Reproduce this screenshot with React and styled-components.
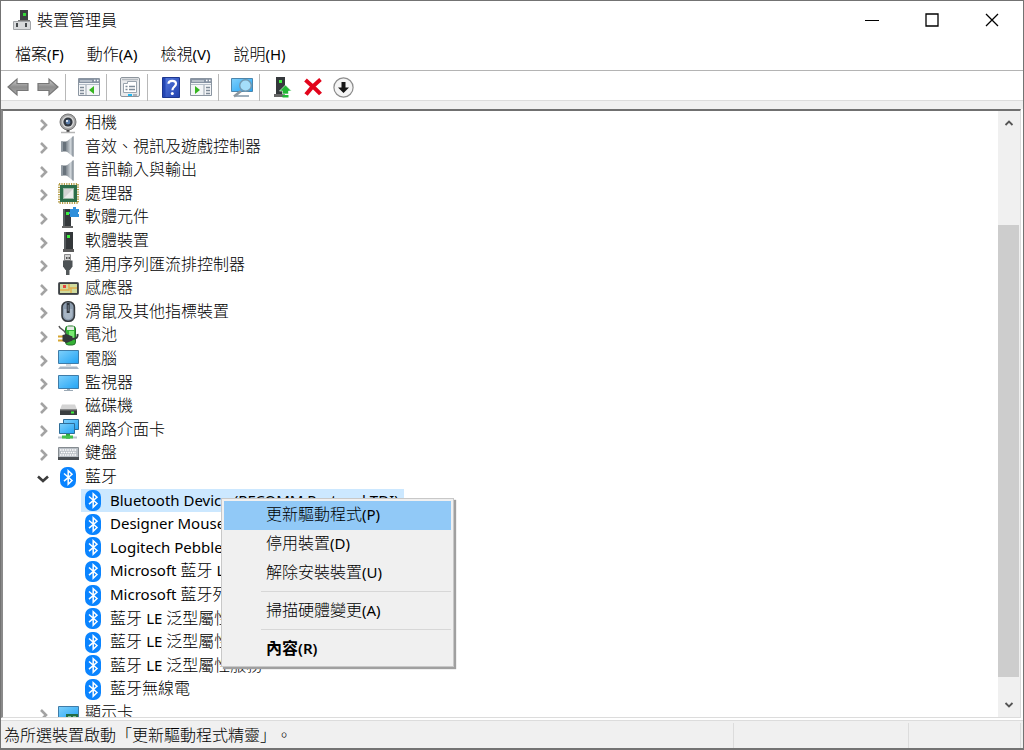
import React from 'react';
import styled, { createGlobalStyle, css } from 'styled-components';

const theme = {
  font: "'Open Sans', 'Noto Sans CJK TC', sans-serif",
  latin: "'Noto Sans', 'Open Sans', sans-serif",
  text: '#000',
  face: '#f0f0f0',
  line: '#dcdcdc',
  frame: '#737373',
  selected: '#cce8ff',
  hover: '#91c9f7',
};

const GlobalStyle = createGlobalStyle`
  * {
    box-sizing: border-box;
  }
  body {
    margin: 0;
    background: #fff;
  }
  button {
    border: none;
    padding: 0;
    background: none;
    color: inherit;
    font: inherit;
  }
  svg {
    display: block;
    flex: none;
  }
`;

const Window = styled.div`
  display: flex;
  flex-direction: column;
  height: 100vh;
  border: 1px solid ${theme.frame};
  border-bottom-width: 2px;
  background: #fff;
  color: ${theme.text};
  font-family: ${theme.font};
  font-size: 16px;
  font-weight: 300;
  line-height: 24px;
  text-spacing-trim: space-all;
  overflow: hidden;
  white-space: nowrap;
`;

const Text = styled.span`
  display: block;
  padding-bottom: 2px;
  line-height: 22px;
`;

const Latin = styled.span`
  font-family: ${theme.latin};
  font-size: 15px;
  font-weight: ${(props) => (props.$bold ? 600 : 400)};
`;

const TitleBar = styled.header`
  display: flex;
  align-items: center;
  height: 38px;
  flex: none;
  padding: 0 1px 0 11px;
`;

const Title = styled.h1`
  flex: 1;
  margin: 0 0 0 5px;
  font-size: 16px;
  font-weight: 300;
`;

const CaptionButton = styled.button`
  display: flex;
  align-items: center;
  justify-content: center;
  width: 60px;
  height: 36px;
`;

const MenuBar = styled.nav`
  display: flex;
  align-items: center;
  height: 31px;
  flex: none;
  padding-left: 14px;
  gap: 23px;
`;

const MenuButton = styled.button`
  display: block;
`;

const ToolBar = styled.div`
  display: flex;
  align-items: center;
  height: 31px;
  flex: none;
  padding: 3px 0 0 2px;
  border-top: 1px solid #b4b4b4;
  border-bottom: 1px solid ${theme.line};
`;

const ToolButton = styled.button`
  display: flex;
  align-items: center;
  justify-content: center;
  width: 30px;
  height: 26px;
`;

const Divider = styled.span`
  width: 1px;
  height: 27px;
  margin: 0 8px 0 2px;
  background: #b8b8b8;
`;

const Pane = styled.main`
  position: relative;
  display: flex;
  flex: 1;
  min-height: 0;
  margin-right: 2px;
  border-left: 2px solid #8a8a8a;
  border-right: 1px solid ${theme.line};
  border-top: 2px solid #707070;
  border-bottom: 1px solid ${theme.line};
`;

const Band = styled.div`
  height: 8px;
  flex: none;
  background: ${theme.face};
`;

const Tree = styled.ul`
  flex: 1;
  min-width: 0;
  margin: 0;
  padding: 0 0 0 32px;
  list-style: none;
  overflow: hidden;
`;

const Row = styled.li`
  display: flex;
  align-items: center;
  height: 24px;
  padding-left: ${(props) => (props.$child ? 46 : 0)}px;
  &:nth-child(5n + 2),
  &:nth-child(5n + 4) {
    height: 23px;
  }
`;

const Toggle = styled.button`
  display: flex;
  justify-content: center;
  width: 16px;
  margin: 3px 5px 0 0;
`;

const Entry = styled.span`
  display: flex;
  align-items: center;
  height: 100%;
  padding: 0 5px 0 2px;
  gap: 6px;
  ${(props) =>
    props.$selected &&
    css`
      background: ${theme.selected};
    `}
`;

const ScrollBar = styled.div`
  display: flex;
  flex-direction: column;
  width: 22px;
  background: ${theme.face};
`;

const ScrollButton = styled.button`
  display: flex;
  align-items: center;
  justify-content: center;
  height: 24px;
  flex: none;
`;

const Track = styled.div`
  flex: ${(props) => props.$share};
`;

const Thumb = styled(Track)`
  margin-right: 1px;
  background: #cdcdcd;
`;

const ContextMenu = styled.div`
  position: absolute;
  top: 387px;
  left: 218px;
  width: 233px;
  padding: 2px;
  border: 1px solid #c8c8c8;
  background: ${theme.face};
  box-shadow: 2px 2px 1px #a0a0a0;
`;

const ContextItem = styled.button`
  display: flex;
  align-items: center;
  width: 100%;
  height: 29px;
  padding: 0 0 1px 42px;
  font-weight: ${(props) => (props.$bold ? 700 : 300)};
  background: ${(props) => (props.$active ? theme.hover : 'none')};
`;

const Separator = styled.hr`
  height: 1px;
  margin: 3px 0 5px 37px;
  border: none;
  background: #d7d7d7;
`;

const StatusBar = styled.footer`
  display: flex;
  height: 28px;
  flex: none;
  margin-top: 2px;
  padding: 2px 2px 0 0;
  border-top: 1px solid ${theme.line};
  background: ${theme.face};
`;

const StatusCell = styled.div`
  flex: ${(props) => (props.$width ? `0 0 ${props.$width}px` : 1)};
  min-width: 0;
  padding-left: 3px;
  border-right: 1px solid ${theme.line};
`;

// the latin part of a label is set one size smaller than the chinese part
const Label = ({ children, bold }) => (
  <Text>
    {children.split(/([\x21-\x7e][\x20-\x7e]*)/).map((part, i) =>
      i % 2 ? (
        <Latin key={i} $bold={bold}>
          {part}
        </Latin>
      ) : (
        part
      )
    )}
  </Text>
);

const Svg = ({ children, w = 21, h = 21 }) => (
  <svg width={w} height={h} viewBox={`0 0 ${w} ${h}`} aria-hidden='true'>
    {children}
  </svg>
);

const Defs = styled.svg`
  position: absolute;
`;

const Gradients = () => (
  <Defs width='0' height='0' aria-hidden='true'>
    <defs>
      <linearGradient id='screen' x1='0' y1='0' x2='1' y2='1'>
        <stop offset='0' stopColor='#7fd0fb' />
        <stop offset='1' stopColor='#22a4f5' />
      </linearGradient>
      <linearGradient id='metal' x1='0' y1='0' x2='1' y2='0'>
        <stop offset='0' stopColor='#7c858d' />
        <stop offset='0.6' stopColor='#cdd3d8' />
        <stop offset='1' stopColor='#8a939b' />
      </linearGradient>
      <linearGradient id='arrow' x1='0' y1='0' x2='0' y2='1'>
        <stop offset='0' stopColor='#d2d2d2' />
        <stop offset='0.5' stopColor='#8d8d8d' />
        <stop offset='1' stopColor='#a9a9a9' />
      </linearGradient>
      <linearGradient id='book' x1='0' y1='0' x2='1' y2='1'>
        <stop offset='0' stopColor='#5b7fe0' />
        <stop offset='1' stopColor='#1f3fae' />
      </linearGradient>
    </defs>
  </Defs>
);

const icons = {
  camera: (
    <Svg>
      <circle cx='10' cy='9' r='8' fill='#a4a4a4' stroke='#777' />
      <circle cx='10' cy='9' r='6' fill='#d8d8d8' />
      <circle cx='10' cy='9' r='4.6' fill='#31373f' />
      <circle cx='10' cy='9' r='2.4' fill='#5a7ca8' />
      <circle cx='9' cy='8' r='1' fill='#fff' />
      <path d='M8.5 17h3v2h-3z' fill='#444' />
      <path d='M3 19.5h14' stroke='#b5b5b5' strokeWidth='1.5' />
    </Svg>
  ),
  speaker: (
    <Svg>
      <path d='M3 5.5h6v10H3z' fill='#68727b' />
      <path d='M3 5.5h2v10H3z' fill='#929ba3' />
      <path d='M8 6l7.5-6v21L8 15z' fill='url(#metal)' />
      <path d='M15 0.5v20' stroke='#8d969e' />
    </Svg>
  ),
  chip: (
    <Svg>
      <rect x='1' y='1' width='19' height='19' fill='none' stroke='#b49b45' strokeWidth='2' strokeDasharray='1.2 1.2' />
      <rect x='2' y='2' width='17' height='17' fill='#2c6e4a' />
      <rect x='5.5' y='5.5' width='10' height='10' fill='#d4d4d4' stroke='#9dbba9' />
      <path d='M15 6v9H6z' fill='#ececec' />
    </Svg>
  ),
  component: (
    <Svg>
      <path d='M4 19h11v2H4z' fill='#666' />
      <path d='M5 2h8v17H5z' fill='#34383b' />
      <path d='M5 2h2v17H5z' fill='#555a5d' />
      <path d='M8 5h3v3H8z' fill='#3df03d' />
      <path d='M12 2h3V0h3v2h3v3h-1v2h1v3h-9V7h-1V5h1z' fill='#2f8fdb' />
    </Svg>
  ),
  device: (
    <Svg>
      <path d='M5 18h11v3H5z' fill='#5b5b5b' />
      <path d='M6 1h9v17H6z' fill='#33373a' />
      <path d='M6 1h2v17H6z' fill='#565b5e' />
      <path d='M9 4h3v3H9z' fill='#3df03d' />
    </Svg>
  ),
  usb: (
    <Svg>
      <path d='M6.5 0.5h6v6h-6z' fill='#d3d3d3' stroke='#8b8b8b' />
      <path d='M8 3h1.5v2H8zM10.5 3H12v2h-1.5z' fill='#555' />
      <path d='M5 6.5h9.5v6L12 16H7.5L5 12.5z' fill='#4d5255' />
      <path d='M8 16h3.5v5H8z' fill='#53585b' />
    </Svg>
  ),
  sensor: (
    <Svg>
      <rect x='0.5' y='4.5' width='20' height='12' rx='1' fill='#3c4043' stroke='#55595c' />
      <path d='M2 6h17v9H2z' fill='#cfdb9e' />
      <path d='M2 12h9V6M11 10h8M13 15v-5' stroke='#e1ae4d' strokeWidth='1.4' fill='none' />
      <path d='M5 7h3v3H5z' fill='#e64840' />
    </Svg>
  ),
  mouse: (
    <Svg>
      <rect x='4' y='0.8' width='12.4' height='19.4' rx='5.5' fill='#8b9bad' stroke='#34383d' strokeWidth='1.6' />
      <path d='M6 8v6a4.2 4.2 0 0 0 8.4 0V8' fill='#a8b6c5' />
      <path d='M8.7 2h3v10h-3z' fill='#2f353c' />
      <path d='M10.2 4v6' stroke='#7a8592' />
    </Svg>
  ),
  battery: (
    <Svg>
      <rect x='7.5' y='1' width='10' height='19' rx='3' fill='#35b236' stroke='#24712a' />
      <path d='M9 1.5h7V5H9z' fill='#e6eae6' />
      <path d='M11 6h5v7h-5z' fill='#7bea74' />
      <path d='M1 1c1 4 5 2 7 8' fill='none' stroke='#555' strokeWidth='1.4' />
      <path d='M0 11.5h6M0 15.5h6' stroke='#d6a52f' strokeWidth='1.8' />
      <path d='M4.5 10l4-1 6 2.5v4L8.5 18l-4-2z' fill='#34383a' />
      <path d='M14 14c5 0 6-2 5.5-5' fill='none' stroke='#34383a' strokeWidth='2' />
    </Svg>
  ),
  computer: (
    <Svg>
      <path d='M0.5 1.5h20v13h-20z' fill='url(#screen)' stroke='#3f7ca8' />
      <path d='M8 15h5v2H8z' fill='#d3dae0' />
      <path d='M2 17.5h17l2 2.5H0z' fill='#a7b5c3' />
    </Svg>
  ),
  monitor: (
    <Svg>
      <path d='M0.5 3.5h20v13h-20z' fill='url(#screen)' stroke='#3f7ca8' />
      <path d='M9 17h3v2H9z' fill='#9ba9b5' />
      <path d='M6 18.5h9' stroke='#9ba9b5' />
    </Svg>
  ),
  disk: (
    <Svg>
      <path d='M4 8.5h13l2 5H2z' fill='#d4d4d4' />
      <path d='M2 13.5h17V19H2z' fill='#3b3e40' />
      <path d='M2 13.5h17v1H2z' fill='#777' />
      <path d='M13 15.5h3v2h-3z' fill='#3df03d' />
    </Svg>
  ),
  network: (
    <Svg>
      <path d='M5.5 0.5h15v10h-15z' fill='url(#screen)' stroke='#2e6d98' />
      <path d='M1.5 4.5h15v10h-15z' fill='url(#screen)' stroke='#2e6d98' />
      <path d='M8 15h4v5H8z' fill='#2fa83c' />
      <path d='M0 18.5h19' stroke='#b9c3cb' strokeWidth='2' />
      <path d='M4 18h11' stroke='#43c24c' strokeWidth='3' />
    </Svg>
  ),
  keyboard: (
    <Svg>
      <path d='M0.5 4.5h20v11h-20z' fill='#b9bfc5' stroke='#858b90' />
      <path d='M2 7h17M3 9.5h15M2 12h17' stroke='#fff' strokeWidth='1.6' strokeDasharray='1.6 0.8' />
      <path d='M0 14h21v3H0z' fill='#4a4e52' />
    </Svg>
  ),
  bluetooth: (
    <Svg>
      <rect x='2' y='0' width='16' height='21' rx='7' fill='#0a84ff' />
      <path d='M6 6.5l8 7-3.8 3.8V3.7L14 7.3l-8 6.8' fill='none' stroke='#fff' strokeWidth='1.5' />
    </Svg>
  ),
  display: (
    <Svg>
      <path d='M0.5 3.5h20v13h-20z' fill='url(#screen)' stroke='#3f7ca8' />
      <path d='M8 11h12v7H8z' fill='#236c44' />
      <path d='M10 13h3v2h-3zM15 13h3v3h-3z' fill='#7cc092' />
    </Svg>
  ),
};

const tree = [
  ['camera', '相機'],
  ['speaker', '音效、視訊及遊戲控制器'],
  ['speaker', '音訊輸入與輸出'],
  ['chip', '處理器'],
  ['component', '軟體元件'],
  ['device', '軟體裝置'],
  ['usb', '通用序列匯流排控制器'],
  ['sensor', '感應器'],
  ['mouse', '滑鼠及其他指標裝置'],
  ['battery', '電池'],
  ['computer', '電腦'],
  ['monitor', '監視器'],
  ['disk', '磁碟機'],
  ['network', '網路介面卡'],
  ['keyboard', '鍵盤'],
  [
    'bluetooth',
    '藍牙',
    [
      'Bluetooth Device (RFCOMM Protocol TDI)',
      'Designer Mouse',
      'Logitech Pebble',
      'Microsoft 藍牙 LE',
      'Microsoft 藍牙列',
      '藍牙 LE 泛型屬性服務',
      '藍牙 LE 泛型屬性服務',
      '藍牙 LE 泛型屬性服務',
      '藍牙無線電',
    ],
  ],
  ['display', '顯示卡'],
];

const Console = ({ flip }) => (
  <Svg w={22} h={20}>
    <path d='M0.5 1.5h21v17h-21z' fill='#f3f5f7' stroke='#8b95a1' />
    <path d='M1 2h20v4H1z' fill='#8793a3' />
    <path d='M2 4h12' stroke='#e6eaee' />
    <path d='M16 3.5h1.5M19 3.5h1.5' stroke='#fff' strokeWidth='1.5' />
    <path d='M1 7.5h20' stroke='#b5bec8' />
    {flip ? (
      <>
        <path d='M14 8v10' stroke='#9aa4af' />
        <path d='M16 10.5h4M16 13.5h4M16 16.5h4' stroke='#7f8b98' strokeWidth='1.4' />
        <path d='M5 9v8l5-4z' fill='#36b51f' />
      </>
    ) : (
      <>
        <path d='M8 8v10' stroke='#9aa4af' />
        <path d='M2 10.5h4M2 13.5h4M2 16.5h4' stroke='#7f8b98' strokeWidth='1.4' />
        <path d='M16 9v8l-5-4z' fill='#36b51f' />
      </>
    )}
  </Svg>
);

const Arrow = ({ d }) => (
  <Svg w={22} h={20}>
    <path d={d} fill='url(#arrow)' stroke='#777' strokeWidth='1.2' />
  </Svg>
);

const Chevron = ({ open }) =>
  open ? (
    <Svg w={12} h={10}>
      <path d='M1 2.5L6 7l5-4.5' fill='none' stroke='#3c3c3c' strokeWidth='2.6' />
    </Svg>
  ) : (
    <Svg w={9} h={12}>
      <path d='M2 1L7 6l-5 5' fill='none' stroke='#a3a3a3' strokeWidth='2.6' />
    </Svg>
  );

const ScrollArrow = ({ d }) => (
  <Svg w={10} h={8}>
    <path d={d} fill='none' stroke='#555' strokeWidth='1.8' />
  </Svg>
);

const DeviceTree = () => (
  <Tree role='tree'>
    {tree.map(([icon, name, children]) => (
      <React.Fragment key={name}>
        <Row role='treeitem' aria-expanded={!!children}>
          <Toggle aria-label={name}>
            <Chevron open={!!children} />
          </Toggle>
          <Entry>
            {icons[icon]}
            <Label>{name}</Label>
          </Entry>
        </Row>
        {children &&
          children.map((child, i) => (
            <Row key={i} role='treeitem' $child>
              <Entry $selected={i === 0}>
                {icons[icon]}
                <Label>{child}</Label>
              </Entry>
            </Row>
          ))}
      </React.Fragment>
    ))}
  </Tree>
);

const Tools = () => (
  <ToolBar role='toolbar'>
    <ToolButton aria-label='上一頁'>
      <Arrow d='M1 10l9-8v4.5h11v7H10V18z' />
    </ToolButton>
    <ToolButton aria-label='下一頁'>
      <Arrow d='M21 10l-9-8v4.5H1v7h11V18z' />
    </ToolButton>
    <Divider />
    <ToolButton aria-label='顯示主控台樹狀目錄'>
      <Console />
    </ToolButton>
    <Divider />
    <ToolButton aria-label='內容'>
      <Svg w={20} h={21}>
        <rect x='0.5' y='0.5' width='19' height='19' rx='1.5' fill='#e8eaec' stroke='#8d959d' />
        <path d='M2 2.5h16' stroke='#b4bac0' strokeWidth='1.6' />
        <path d='M3.5 6.5h4v-2h9v11h-13z' fill='#fff' stroke='#9aa4ae' />
        <path d='M5.5 9.5h2M5.5 12.5h2M9 9.5h6M9 12.5h6' stroke='#7f8c99' strokeWidth='1.3' />
        <path d='M8 18h4' stroke='#22b8f0' strokeWidth='2' />
        <path d='M13 18h4' stroke='#9aa4ae' strokeWidth='1.6' />
      </Svg>
    </ToolButton>
    <Divider />
    <ToolButton aria-label='說明'>
      <Svg w={18} h={21}>
        <path d='M0.5 0.5h17v20h-17z' fill='url(#book)' stroke='#1d378f' />
        <path d='M1 1h2.5v19H1z' fill='#2446b4' />
        <path d='M6.5 6.8C6.5 2.8 14 2.8 14 6.8c0 3-3.6 3-3.6 6.4' fill='none' stroke='#fff' strokeWidth='2.2' />
        <circle cx='10.3' cy='16.6' r='1.5' fill='#fff' />
      </Svg>
    </ToolButton>
    <ToolButton aria-label='顯示動作窗格'>
      <Console flip />
    </ToolButton>
    <Divider />
    <ToolButton aria-label='掃描硬體變更'>
      <Svg w={22} h={21}>
        <path d='M0.5 1.5h21v13h-21z' fill='url(#screen)' stroke='#4c86ad' />
        <path d='M5 19h13' stroke='#9fb0bd' strokeWidth='2' />
        <path d='M10 14l-7 5.5' stroke='#8d979f' strokeWidth='2.6' />
        <circle cx='14.5' cy='8.5' r='5.8' fill='#a4ddfa' stroke='#7398b0' strokeWidth='1.4' />
      </Svg>
    </ToolButton>
    <Divider />
    <ToolButton aria-label='更新驅動程式'>
      <Svg w={20} h={21}>
        <path d='M1 17h11v3H1z' fill='#666' />
        <path d='M3 0h9v17H3z' fill='#34383b' />
        <path d='M6 3h3v3H6z' fill='#3df03d' />
        <path d='M12.5 8l6 6h-3v3h-6v-3h-3z' fill='#22b836' stroke='#fff' strokeWidth='0.6' />
        <path d='M9.5 18h6v2.5h-6z' fill='#22b836' />
      </Svg>
    </ToolButton>
    <ToolButton aria-label='解除安裝裝置'>
      <Svg w={18} h={18}>
        <path d='M1.5 2C6 6 12 11 16.5 16M16.5 1.5C11 6 6 11 2 16.5' fill='none' stroke='#e2041b' strokeWidth='4' />
      </Svg>
    </ToolButton>
    <ToolButton aria-label='停用裝置'>
      <Svg>
        <circle cx='10.5' cy='10.5' r='9.6' fill='#f4f4f4' stroke='#8c8c8c' strokeWidth='1.2' />
        <path d='M8.5 5h4v5.5H16L10.5 16 5 10.5h3.5z' fill='#151515' />
      </Svg>
    </ToolButton>
  </ToolBar>
);

const App = () => {
  return (
    <>
      <GlobalStyle />
      <Gradients />
      <Window>
        <TitleBar>
          <Svg w={20} h={21}>
            <path d='M8 0h8v12H8z' fill='#3c4043' />
            <path d='M11 3h3v3h-3z' fill='#35d93a' />
            <path d='M6 10h12v3H6z' fill='#777' />
            <path d='M1.5 11.5h17v8h-17z' fill='#d8dadc' stroke='#a2a5a8' />
            <path d='M4 13h2v4H4zM13 13h2v4h-2z' fill='#44484b' />
          </Svg>
          <Title>裝置管理員</Title>
          <CaptionButton aria-label='最小化'>
            <Svg w={14} h={14}>
              <path d='M0 7.5h14' stroke='#000' />
            </Svg>
          </CaptionButton>
          <CaptionButton aria-label='最大化'>
            <Svg w={14} h={14}>
              <path d='M1 1h12v12H1z' fill='none' stroke='#000' strokeWidth='1.3' />
            </Svg>
          </CaptionButton>
          <CaptionButton aria-label='關閉'>
            <Svg w={14} h={14}>
              <path d='M1 1l12 12M13 1L1 13' stroke='#000' strokeWidth='1.3' />
            </Svg>
          </CaptionButton>
        </TitleBar>
        <MenuBar>
          {['檔案(F)', '動作(A)', '檢視(V)', '說明(H)'].map((name) => (
            <MenuButton key={name}>
              <Label>{name}</Label>
            </MenuButton>
          ))}
        </MenuBar>
        <Tools />
        <Band />
        <Pane>
          <DeviceTree />
          <ScrollBar>
            <ScrollButton aria-label='向上'>
              <ScrollArrow d='M1.5 6L5 2.5 8.5 6' />
            </ScrollButton>
            <Track $share={90} />
            <Thumb $share={452} />
            <Track $share={16} />
            <ScrollButton aria-label='向下'>
              <ScrollArrow d='M1.5 2L5 5.5 8.5 2' />
            </ScrollButton>
          </ScrollBar>
          <ContextMenu role='menu'>
            <ContextItem role='menuitem' $active>
              <Label>更新驅動程式(P)</Label>
            </ContextItem>
            <ContextItem role='menuitem'>
              <Label>停用裝置(D)</Label>
            </ContextItem>
            <ContextItem role='menuitem'>
              <Label>解除安裝裝置(U)</Label>
            </ContextItem>
            <Separator />
            <ContextItem role='menuitem'>
              <Label>掃描硬體變更(A)</Label>
            </ContextItem>
            <Separator />
            <ContextItem role='menuitem' $bold>
              <Label bold>內容(R)</Label>
            </ContextItem>
          </ContextMenu>
        </Pane>
        <StatusBar>
          <StatusCell>為所選裝置啟動「更新驅動程式精靈」。</StatusCell>
          <StatusCell $width={175} />
          <StatusCell $width={112} />
        </StatusBar>
      </Window>
    </>
  );
};

export default App;
